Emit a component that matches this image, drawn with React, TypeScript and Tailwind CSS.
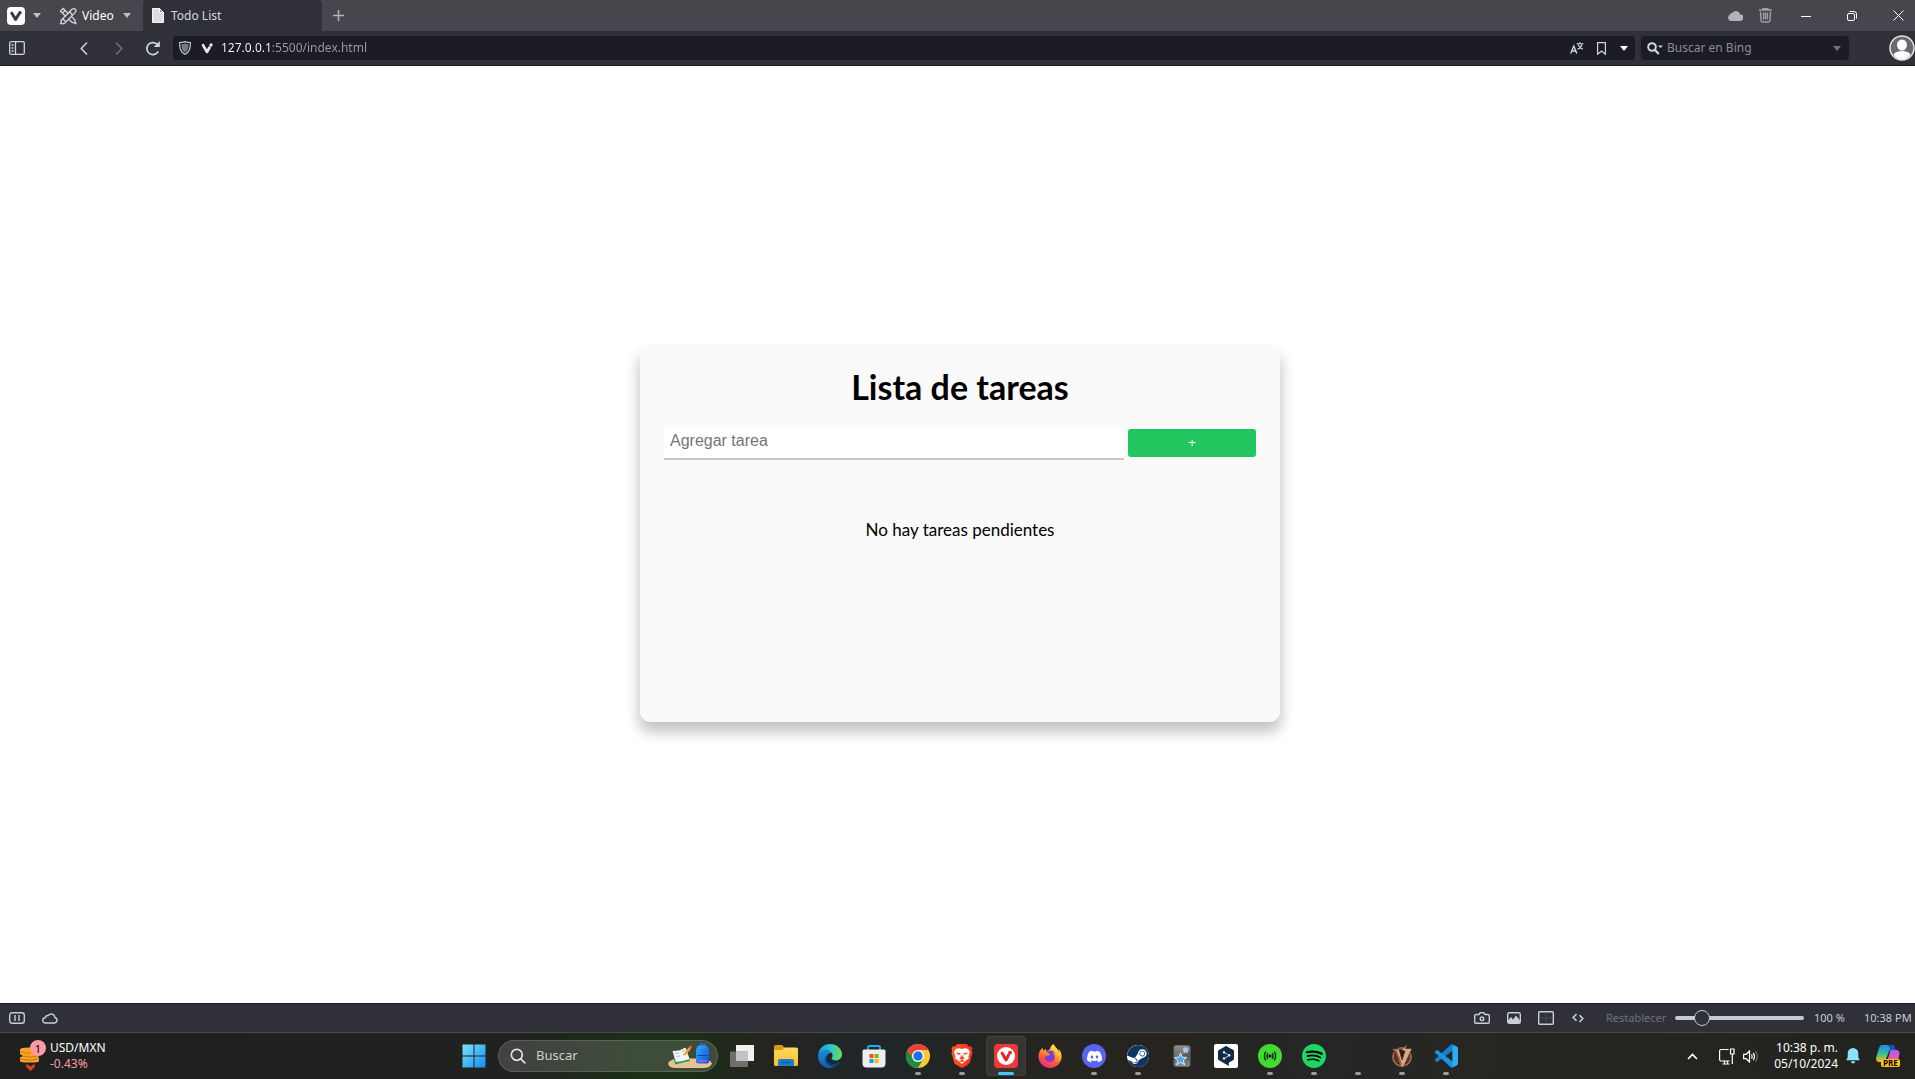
import { useState } from "react";
import type { ReactNode } from "react";
import { SiVivaldi, SiDiscord, SiSteam, SiSpotify, SiFirefoxbrowser, SiDeepl } from "react-icons/si";

function Caret({ className }: { className: string }) {
  return (
    <svg viewBox="0 0 8 5" className={`h-[5px] w-2 ${className}`} fill="currentColor">
      <path d="M0 0h8L4 5z" />
    </svg>
  );
}

function TabBar() {
  return (
    <header className="flex h-[31px] items-stretch bg-[#46464d] text-[12px] text-[#d5d8e0]">
      <button aria-label="Menú de Vivaldi" className="flex w-[50px] items-center gap-2 pl-[7px] text-[#bfc0c6]">
        <span className="grid size-[18px] place-items-center rounded-[4px] bg-white">
          <svg viewBox="0 0 18 18" className="size-[18px]">
            <path d="M4.800 6.200 8.600 12.400l3-5" fill="none" stroke="#3b3b42" strokeWidth="3" strokeLinecap="round" strokeLinejoin="round" />
            <circle cx="13" cy="5.800" r="1.800" fill="#3b3b42" />
          </svg>
        </span>
        <Caret className="" />
      </button>
      <button className="flex w-[93px] items-center gap-[5px] pl-[9px] text-white">
        <svg viewBox="0 0 18 18" className="size-[18px]" fill="none" stroke="#d8d8dc" strokeWidth="1.300">
          <path d="M1.500 4.200 4.200 1.500 15.500 12.500l1.300 4-4-1.300zM3 6.500 6.500 3" />
          <path d="M2 13.500 13 2.200q2.200-1.200 3.500.2 1 1.400-.3 3L6 16q-2.500 1.500-4.500.5 1.500-1 .5-3z" fill="#46464d" />
          <path d="M10.500 4.800 13.500 8M4 12l2.500 2.500" />
        </svg>
        <span>Video</span>
        <Caret className="ml-1 text-[#bfc0c6]" />
      </button>
      <button className="flex w-[179px] items-center gap-[7px] rounded-t-[4px] bg-[#2f3038] pl-[9px]">
        <svg viewBox="0 0 12 15" className="h-[15px] w-3">
          <path d="M.5.500h7l4 4v10H.5z" fill="#dedede" stroke="#f7f7f7" />
          <path d="M7.500.500v4h4z" fill="#8c8c8c" stroke="#f7f7f7" />
        </svg>
        <span>Todo List</span>
      </button>
      <button aria-label="Nueva pestaña" className="grid w-8 place-items-center text-[#b3b4b9]">
        <svg viewBox="0 0 11 11" className="size-[11px]" stroke="currentColor" strokeWidth="1.500"><path d="M5.500 0v11M0 5.500h11" /></svg>
      </button>
      <div className="ml-auto flex items-center">
        <button aria-label="Sincronización" className="grid w-[30px] place-items-center">
          <svg viewBox="0 0 16 11" className="h-[11px] w-4" fill="#b2b3b7"><path d="M3.500 11a3.500 3.500 0 0 1-.4-6.500A3 3 0 0 1 6 2.500 4 4 0 0 1 13 4.200 3.400 3.400 0 0 1 12.800 11z" /></svg>
        </button>
        <button aria-label="Papelera" className="grid w-[30px] place-items-center text-[#a0a1a6]">
          <svg viewBox="0 0 13 15" className="h-[15px] w-[13px]" fill="none" stroke="currentColor" strokeWidth="1.400">
            <path d="M0 2h13M4 1.800V.700h5v1.100M1.500 3.500 2 12.500q.2 1.500 1.500 1.500h6q1.300 0 1.500-1.500l.5-9M4.500 4.500v7M6.500 4.500v7M8.500 4.500v7" />
          </svg>
        </button>
        <button aria-label="Minimizar" className="ml-2.5 grid h-full w-8 place-items-center"><span className="mt-0.5 h-px w-2.5 bg-white" /></button>
        <button aria-label="Restaurar" className="grid h-full w-[60px] place-items-center">
          <svg viewBox="0 0 10 10" className="size-2.5" fill="none" stroke="#fff"><rect x=".5" y="2.500" width="7" height="7" rx="1.500" /><path d="M2.500.500H7a2.500 2.500 0 0 1 2.500 2.500v4.500" /></svg>
        </button>
        <button aria-label="Cerrar" className="grid h-full w-[33px] place-items-center">
          <svg viewBox="0 0 11 11" className="size-[11px]" stroke="#fff"><path d="m.5.500 10 10M10.500.500l-10 10" /></svg>
        </button>
      </div>
    </header>
  );
}

function AddressBar() {
  return (
    <nav className="flex h-[35px] items-center border-b border-[#17171c] bg-[#2f3038] text-[#d0d5df]">
      <button aria-label="Panel" className="grid w-[34px] place-items-center">
        <svg viewBox="0 0 16 14" className="h-3.5 w-4" fill="none" stroke="currentColor" strokeWidth="1.300"><rect x=".7" y=".7" width="14.600" height="12.600" rx="1.500" /><path d="M6.500.700v12.600M2.500 4h2M2.500 7h2M2.500 10h2" /></svg>
      </button>
      <button aria-label="Atrás" className="ml-[33px] grid w-[34px] place-items-center">
        <svg viewBox="0 0 8 13" className="h-[13px] w-2" fill="none" stroke="currentColor" strokeWidth="1.500"><path d="M7 .5 1.200 6.500 7 12.500" /></svg>
      </button>
      <button aria-label="Adelante" className="ml-px grid w-[34px] place-items-center text-[#70727c]">
        <svg viewBox="0 0 8 13" className="h-[13px] w-2" fill="none" stroke="currentColor" strokeWidth="1.500"><path d="m1 .5 5.800 6L1 12.500" /></svg>
      </button>
      <button aria-label="Recargar" className="grid w-[34px] place-items-center">
        <svg viewBox="0 0 16 15" className="h-[15px] w-4"><path d="M13.200 10.300A6 6 0 1 1 12 3.200" fill="none" stroke="currentColor" strokeWidth="1.700" /><path d="M14.800 0v6H8.800z" fill="currentColor" /></svg>
      </button>
      <div className="ml-[3px] flex h-6 flex-1 items-center rounded-[4px] bg-[#1b1c25] pl-1.5">
        <svg viewBox="0 0 12 14" className="h-3.5 w-3"><path d="M.6 1.500Q3 1.500 6 .600q3 .9 5.400.9c0 6-.8 9.500-5.400 11.800C1.400 11 .6 7.500.6 1.500z" fill="none" stroke="#c5c9d2" strokeWidth="1.200" /><path d="M2.500 3.200Q4.500 3.200 6 2.500q1.500.7 3.500.7c0 4.300-.6 6.500-3.500 8.200-2.900-1.700-3.500-3.900-3.500-8.200z" fill="#777a83" /></svg>
        <svg viewBox="0 0 12 11" className="ml-2.5 h-[11px] w-3"><path d="M2 2.200 6 9l2.500-4.500" fill="none" stroke="#e6e8ee" strokeWidth="2.600" strokeLinecap="round" strokeLinejoin="round" /><circle cx="10" cy="2" r="1.700" fill="#e6e8ee" /></svg>
        <input
          aria-label="Dirección"
          defaultValue="127.0.0.1:5500/index.html"
          className="ml-2 w-0 flex-1 bg-[linear-gradient(90deg,#fff_51px,#9a9da7_51px)] bg-clip-text text-[12px] leading-6 text-transparent caret-white outline-none"
        />
        <button aria-label="Traducir" className="grid w-6 place-items-center">
          <svg viewBox="0 0 14 12" className="h-3 w-3.5" fill="none" stroke="currentColor" strokeWidth="1.400"><path d="M.7 11.500 3.800 4l3 7.500M1.800 9h4" /><path strokeWidth="1.100" d="M6.500 1.800h7M10 .3v1.500M8 2.500q1.500 3.500 5 4.700M12 2.500q-1 3.500-4.500 4.700" /></svg>
        </button>
        <button aria-label="Marcador" className="grid w-6 place-items-center">
          <svg viewBox="0 0 9 13" className="h-[13px] w-[9px]" fill="none" stroke="currentColor" strokeWidth="1.200"><path d="M.6.600h7.800v11.600L4.500 9 .6 12.200z" /></svg>
        </button>
        <button aria-label="Mostrar marcadores" className="grid w-[22px] place-items-center"><Caret className="text-white" /></button>
      </div>
      <div className="ml-1.5 flex h-6 w-52 items-center rounded-[4px] bg-[#1b1c25] pl-1.5">
        <svg viewBox="0 0 16 13" className="h-[13px] w-4"><circle cx="5" cy="5" r="3.800" fill="none" stroke="#d0d5df" strokeWidth="2" /><path d="m8 8 3.800 4" stroke="#d0d5df" strokeWidth="2.300" /><path d="M11 3.500h5L13.500 6z" fill="#d0d5df" /></svg>
        <input aria-label="Buscar en Bing" placeholder="Buscar en Bing" className="ml-1 w-0 flex-1 bg-transparent text-[12px] leading-6 outline-none placeholder:text-[#8b8d97]" />
        <button aria-label="Motores de búsqueda" className="grid w-6 place-items-center"><Caret className="text-[#70727c]" /></button>
      </div>
      <button aria-label="Perfil" className="ml-10 w-[26px]">
        <svg viewBox="0 0 26 26" className="size-[26px]"><circle cx="13" cy="13" r="12" fill="#6a6a6c" stroke="#e4e4e6" strokeWidth="1.500" /><ellipse cx="13" cy="10" rx="5" ry="5.500" fill="#fff" /><path d="M4.500 19.500q2-3.500 8.500-3.500t8.500 3.500Q18.500 24.500 13 24.500t-8.500-5z" fill="#fff" /></svg>
      </button>
    </nav>
  );
}

function TodoPage() {
  const [task, setTask] = useState("");
  return (
    <main className="flex flex-1 items-center justify-center bg-white pl-[5px] font-[Lato,sans-serif] text-black">
      <section className="min-h-[375px] w-full max-w-[640px] rounded-[10px] bg-[#fafafa] p-6 shadow-[0_9px_14px_1px_rgba(0,0,0,0.24)]">
        <h1 className="text-center text-[34px] leading-8 font-bold">Lista de tareas</h1>
        <form className="mt-6 flex items-start gap-1" onSubmit={(e) => e.preventDefault()}>
          <input
            aria-label="Agregar tarea"
            placeholder="Agregar tarea"
            value={task}
            onChange={(e) => setTask(e.target.value)}
            className="h-[33px] w-0 flex-1 border-b-2 border-[#c8c8c8] bg-white px-1.5 pb-1 font-['Liberation_Sans',sans-serif] text-base outline-none placeholder:text-[#757575]"
          />
          <button className="mt-0.5 h-7 w-32 rounded-[3px] bg-[#22c55e] font-['Liberation_Sans',sans-serif] text-[13px] text-white">+</button>
        </form>
        <p className="mt-[58px] text-center text-[17px] leading-6">No hay tareas pendientes</p>
      </section>
    </main>
  );
}

function StatusBar() {
  return (
    <footer className="flex h-[29px] items-center border-t border-[#1c1c22] bg-[#2f3038] text-[11px] text-[#c8cdd7]">
      <button aria-label="Pausar" className="grid w-[34px] place-items-center">
        <svg viewBox="0 0 16 12" className="h-3 w-4" fill="none" stroke="currentColor" strokeWidth="1.400"><rect x=".7" y=".7" width="14.600" height="10.600" rx="2.500" /><path d="M6 3v6M10 3v6" /></svg>
      </button>
      <button aria-label="Sincronizar" className="grid w-8 place-items-center">
        <svg viewBox="0 0 16 11" className="h-[11px] w-4" fill="none" stroke="currentColor" strokeWidth="1.400"><path d="M3.500 10a2.600 2.600 0 0 1-.3-5.200A2.800 2.800 0 0 1 6.300 2.500 3.600 3.600 0 0 1 12.800 4.500 2.800 2.800 0 0 1 12.600 10z" /></svg>
      </button>
      <div className="ml-auto flex items-center">
        <button aria-label="Capturar" className="grid w-8 place-items-center">
          <svg viewBox="0 0 16 12" className="h-3 w-4" fill="none" stroke="currentColor" strokeWidth="1.400"><path d="M2 2.500h3L6.200.700h3.600L11 2.500h3q1.300 0 1.300 1.300V10q0 1.300-1.300 1.300H2Q.7 11.300.7 10V3.800Q.7 2.500 2 2.500z" /><circle cx="8" cy="6.800" r="1.800" /></svg>
        </button>
        <button aria-label="Imágenes" className="grid w-8 place-items-center">
          <svg viewBox="0 0 14 12" className="h-3 w-3.5"><rect x=".7" y=".7" width="12.600" height="10.600" rx="1.500" fill="none" stroke="currentColor" strokeWidth="1.400" /><path d="M1 10.500V8.500L4 5l2 2.500L9 3.500l4 5v2.500H1z" fill="currentColor" /></svg>
        </button>
        <button aria-label="Mosaico" className="grid w-8 place-items-center">
          <svg viewBox="0 0 16 14" className="h-3.5 w-4" fill="none" stroke="currentColor" strokeWidth="1.400"><rect x=".7" y=".7" width="14.600" height="12.600" rx="1" /><path d="M8 1.500v11M1.500 7h13" stroke="#4a4c57" strokeWidth="1" /></svg>
        </button>
        <button aria-label="Acciones de página" className="grid w-8 place-items-center">
          <svg viewBox="0 0 12 10" className="h-2.5 w-3" fill="none" stroke="currentColor" strokeWidth="1.600"><path d="M4.500 1 1.200 4.500l3.300 3.300M7.500 2.200l3.300 3.300L7.500 9" /></svg>
        </button>
        <button className="ml-3 w-[60px] text-left whitespace-nowrap text-[#70727d]">Restablecer</button>
        <input
          type="range"
          aria-label="Zoom"
          min="20"
          max="500"
          defaultValue="100"
          className="ml-[9px] h-4 w-[129px] appearance-none bg-transparent [&::-webkit-slider-runnable-track]:h-1 [&::-webkit-slider-runnable-track]:rounded-full [&::-webkit-slider-runnable-track]:bg-[#c5cad3] [&::-webkit-slider-thumb]:-mt-1.5 [&::-webkit-slider-thumb]:size-4 [&::-webkit-slider-thumb]:appearance-none [&::-webkit-slider-thumb]:rounded-full [&::-webkit-slider-thumb]:border [&::-webkit-slider-thumb]:border-[#c5cad3] [&::-webkit-slider-thumb]:bg-[#2f3038]"
        />
        <span className="ml-2.5 w-[50px] whitespace-nowrap">100 %</span>
        <span className="w-[51px] whitespace-nowrap">10:38 PM</span>
      </div>
    </footer>
  );
}

function TaskSlot({ label, indicator, active, children }: { label: string; indicator?: boolean; active?: boolean; children?: ReactNode }) {
  return (
    <button aria-label={label} className="relative grid h-full w-11 place-items-center">
      {active && <span className="absolute inset-x-0.5 top-[3px] bottom-[3px] rounded-[4px] border border-white/5 bg-white/8" />}
      <span className="relative grid size-6 place-items-center">{children}</span>
      {indicator && !active && <span className="absolute bottom-1 h-[3px] w-1.5 rounded-full bg-[#9c9c9a]" />}
      {active && <span className="absolute bottom-1 h-[3px] w-4 rounded-full bg-[#4cc2ff]" />}
    </button>
  );
}

function ExplorerIcon() {
  return (
    <svg viewBox="0 0 24 24" className="size-6">
      <defs><linearGradient id="folder" x2="0" y2="1"><stop stopColor="#ffdb61" /><stop offset="1" stopColor="#fcbc23" /></linearGradient></defs>
      <path d="M0 3q0-2 1.500-2H8l3 3v3H0z" fill="#d99a0b" />
      <path d="M0 6h8l2.500-2.500H22q2 0 2 1.500v15.500q0 1.500-1.500 1.500h-21Q0 22 0 20.500z" fill="url(#folder)" />
      <path d="M4 22v-5q0-2 2-2h12q2 0 2 2v5z" fill="#1a7fd0" />
      <path d="M7.500 18.500h9" stroke="#0d5a9e" strokeWidth="1.500" />
    </svg>
  );
}

function EdgeIcon() {
  return (
    <svg viewBox="0 0 24 24" className="size-6">
      <defs>
        <linearGradient id="edgeTop" y1=".4" y2=".4"><stop stopColor="#1a9de0" /><stop offset=".5" stopColor="#2bc0d8" /><stop offset="1" stopColor="#6be04e" /></linearGradient>
        <linearGradient id="edgeMid" x2="0" y2="1"><stop stopColor="#1690dc" /><stop offset="1" stopColor="#0d5cb0" /></linearGradient>
      </defs>
      <path d="M.1 11C.8 4.500 5.800 0 12 0c7 0 12 5 12 10.200 0 3.600-2.700 6.300-6.200 6.300-2.600 0-4.300-1-4.300-1.900 0-.7 1.100-1.100 1.100-3 0-2.600-2.700-5-6.200-5C4.500 6.600 1.300 8.500.1 11z" fill="url(#edgeTop)" />
      <path d="M.1 11c1.100-2.700 4-4.600 7.700-4.600 2.900 0 5 .9 6.200 2.600-3.700-.6-5.500 2-5.500 4.700 0 5 5.300 8.400 10.500 7-2 2.100-4.600 3.300-7.400 3.300C4.800 24-.7 18 .1 11z" fill="url(#edgeMid)" />
      <path d="M9.500 11c-1.300 1.800-1.200 4.700.7 6.900 2.300 2.500 6.600 3 10.600.6.8-.4 1.500.2 1 1C19 24 10 23.600 7.500 17.500c-1-2.600-.4-5 2-6.500z" fill="#0a3f86" />
    </svg>
  );
}

function StoreIcon() {
  return (
    <svg viewBox="0 0 24 24" className="size-6">
      <path d="M6 6V3.500Q6 2 7.500 2h9Q18 2 18 3.500V6" fill="none" stroke="#20a7ec" strokeWidth="2" />
      <path d="M.5 7q0-1.500 1.500-1.500h20q1.500 0 1.500 1.500v12.500q0 4-4 4h-15q-4 0-4-4z" fill="#eeeeef" />
      <path d="M7.500 10h4v4h-4z" fill="#f25022" /><path d="M12.500 10h4v4h-4z" fill="#7fba00" /><path d="M7.500 15h4v4h-4z" fill="#00a4ef" /><path d="M12.500 15h4v4h-4z" fill="#ffb900" />
    </svg>
  );
}

function ChromeIcon() {
  return (
    <svg viewBox="0 0 24 24" className="size-6">
      <circle cx="12" cy="12" r="12" fill="#fcc934" />
      <path d="M1.600 6A12 12 0 0 1 22.400 6H12l-5.200 9z" fill="#ea4335" />
      <path d="M1.600 6A12 12 0 0 0 12 24l5.200-9-10.400 0z" fill="#1e8e3e" />
      <circle cx="12" cy="12" r="6" fill="#fff" /><circle cx="12" cy="12" r="4.700" fill="#1a73e8" />
    </svg>
  );
}

function BraveIcon() {
  return (
    <svg viewBox="0 0 24 24" className="size-6">
      <defs><linearGradient id="brave" x2="1" y2="0"><stop stopColor="#ff5a1f" /><stop offset="1" stopColor="#fb2c1c" /></linearGradient></defs>
      <path d="M7.500 0h9l2.500 2.500 2-.3 1.500 2.300-.6 2L22.500 9 20 18q-.4 1.400-1.800 2.400L12 24.000l-6.200-3.600Q4.400 19.400 4 18L1.500 9l.6-2.500-.6-2L3 2.200l2 .3z" fill="url(#brave)" />
      <path d="M6 4.800 9.500 4.200 12 5l2.500-.8 3.500.6 2 3.200-1.500 4.500.3 2-3.800 2.700L12 20l-3-2.800-3.800-2.700.3-2L4 8z" fill="#fff" />
      <path d="m6 8.500 4.500.8-.5 1.500-2.500-.5zM18 8.500l-4.500.8.5 1.500 2.500-.5zM10.800 10v3l-1.500 1.500 2.700 1.300 2.700-1.300-1.500-1.500v-3L12 13zM9 17l3-1.300 3 1.300-3 1z" fill="#fb3f1e" />
    </svg>
  );
}

function FirefoxIcon() {
  return (
    <svg viewBox="0 0 24 24" className="size-6">
      <defs><linearGradient id="fox" x1=".8" y1="0" x2=".3" y2="1"><stop stopColor="#fff44f" /><stop offset=".35" stopColor="#ffb52e" /><stop offset=".65" stopColor="#ff5a36" /><stop offset="1" stopColor="#e6288c" /></linearGradient></defs>
      <circle cx="12" cy="12" r="6.500" fill="#7a3bd6" />
      <SiFirefoxbrowser size={24} style={{ fill: "url(#fox)" }} />
    </svg>
  );
}

function AnkiIcon() {
  return (
    <svg viewBox="0 0 24 24" className="size-6">
      <defs><linearGradient id="anki" x2="0" y2="1"><stop stopColor="#777" /><stop offset=".5" stopColor="#555" /><stop offset="1" stopColor="#8c8c8c" /></linearGradient></defs>
      <rect x="4" y="1.500" width="16" height="21" rx="2" fill="url(#anki)" stroke="#6b6b6b" />
      <path d="M4.500 12Q14 13 19.500 7V3q0-1-1-1H5.500q-1 0-1 1z" fill="#fff" opacity=".15" />
      <path d="m10.500 9 1.700 4.200 4.500.2-3.400 3 1.300 4.400-4-2.400-3.800 2.500 1-4.500-3.300-2.900 4.400-.4z" fill="#49a9f2" stroke="#e9f6ff" strokeWidth=".9" />
      <path d="m15.500 3 .9 2 2.100.1-1.600 1.400.6 2-1.900-1-1.800 1.100.5-2.100-1.500-1.400 2-.2z" fill="#7fc6fa" stroke="#e9f6ff" strokeWidth=".6" />
    </svg>
  );
}

function CodeIcon() {
  return (
    <svg viewBox="0 0 24 24" className="size-6">
      <path d="M17.500.100 1 15.200q-.8.700 0 1.400l1.400 1.200q.6.500 1.300 0L20 5.400z" fill="#1180cf" />
      <path d="M17.500 23.900 1 8.800Q.2 8.100 1 7.400l1.400-1.200q.6-.5 1.300 0L20 18.600z" fill="#1a93e0" />
      <path d="M17.500 23.900q.9-.4.900-1.400V1.500q0-1-.9-1.400L22.800 2.600Q24 3.200 24 4.500v15q0 1.300-1.200 1.900z" fill="#2fabf3" />
    </svg>
  );
}

function GameIcon() {
  return (
    <svg viewBox="0 0 24 24" className="size-6">
      <circle cx="12" cy="13" r="9" fill="#3d120f" stroke="#8f7460" strokeWidth="1.800" />
      <path d="M5.500 8q-1.500 6 3 11M18.500 9q2 5-3 10" stroke="#7d2a1e" strokeWidth="2.500" fill="none" />
      <path d="M2 5h7l3 11 3-9-4-1 6-5.500-1.500 4H22L13.500 23h-2.800L5.500 7.500z" fill="#cfae8a" stroke="#5d2a1c" strokeWidth=".8" />
      <path d="m6 6 5.500 15" stroke="#8b5b3d" strokeWidth="1.200" />
    </svg>
  );
}

function SearchArt() {
  return (
    <svg viewBox="0 0 46 26" className="h-[26px] w-[46px]">
      <defs><linearGradient id="bag" y2="1" x2="1"><stop stopColor="#30b0ff" /><stop offset="1" stopColor="#0d4fd8" /></linearGradient></defs>
      <path d="M1 20.500q3-5 11-5h22q8 0 11 5-2 4.500-9 4.500H9q-7 0-8-4.500z" fill="#e8c391" />
      <path d="m6 9 13-4 4 13-15 3.500z" fill="#2f9d57" /><path d="m5.500 8 7-.500 6-3 4 11.500-7 2-6.500 1z" fill="#f4f4fb" />
      <path d="m8 10.500 4-.5M9 13.500l4-.5M15 8.500l3-1.500M16 12l3.500-1.500" stroke="#a9a9c4" strokeWidth=".8" />
      <path d="m17 10.500 5-6.500 2 1.800-5 6-2.600 1z" fill="#f7a228" /><path d="m21.800 4 1.500-1.700 2 1.800L23.800 6z" fill="#ea4b56" />
      <path d="M33 3q0-2.500 2.500-2.500T38 3" fill="none" stroke="#1a6de0" strokeWidth="1.500" />
      <path d="M29 8q0-6 6.500-6T42 8v10.500q0 2-2 2h-9q-2 0-2-2z" fill="url(#bag)" /><path d="M30.500 12.500h10" stroke="#0a3fae" /><path d="M31 18h9" stroke="#b05cf0" strokeWidth="1.500" />
    </svg>
  );
}

function Taskbar() {
  return (
    <div className="grid h-[47px] grid-cols-[1fr_auto_1fr] items-stretch border-t border-[#4a4a4b] bg-[linear-gradient(90deg,#1f2121_0%,#202220_27%,#1c2e17_33%,#1c2e17_36%,#242420_40%,#20262a_46%,#252420_52%,#272420_62%,#242726_68%,#262622_76%,#22221f_100%)] text-[12px] text-white">
      <button className="flex items-center pl-[19px] text-left">
        <span className="relative mr-[5px] h-[30px] w-[26px]">
          <svg viewBox="0 0 26 30" className="h-[30px] w-[26px]">
            <path d="M1 8.500Q1 6.500 10 6.500t9 2v3.500l.5 4q0 1 .5 1.500V20q0 1.500-9.500 1.500T1 20v-3.500l3-1.500-3-2z" fill="#f6a623" />
            <path d="M1 10.500q5 2 11 1.500M3 15q7 2 15 .5M1 18q9 2.500 18 0" stroke="#cf7417" fill="none" />
            <path d="M7 23.500h2l2.500 2 2.500-2h2v2L11.500 30 7 25.500z" fill="#d8431c" />
          </svg>
          <span className="absolute -top-px left-[11px] grid size-4 place-items-center rounded-full bg-[#ff99a4] text-[11px] leading-none text-black">1</span>
        </span>
        <span className="leading-4"><span className="block">USD/MXN</span><span className="block text-[#ff99a4]">-0.43%</span></span>
      </button>
      <div className="flex items-center pl-[5px]">
        <TaskSlot label="Inicio">
          <svg viewBox="0 0 24 24" className="size-6">
            <defs><linearGradient id="win" x2="1" y2="1"><stop stopColor="#7de3fd" /><stop offset="1" stopColor="#0f8cf2" /></linearGradient></defs>
            <path d="M.500.500h11v11H.500zM12.500.500h11v11h-11zM.500 12.500h11v11H.500zM12.500 12.500h11v11h-11z" fill="url(#win)" />
          </svg>
        </TaskSlot>
        <label className="mx-0.5 flex h-8 w-[220px] items-center rounded-full border border-white/15 bg-white/15 pr-1 pl-[11px]">
          <svg viewBox="0 0 16 16" className="size-4" fill="none" stroke="#e2e2e2" strokeWidth="1.700"><circle cx="6.800" cy="6.800" r="5.500" /><path d="m10.800 10.800 4 4" strokeLinecap="round" /></svg>
          <input aria-label="Buscar" placeholder="Buscar" className="ml-2.5 w-0 flex-1 bg-transparent text-[13px] outline-none placeholder:text-[#cfd0ce]" />
          <SearchArt />
        </label>
        <TaskSlot label="Vista de tareas">
          <svg viewBox="0 0 24 24" className="size-6"><path d="M6 1h18v16H6z" fill="#f0f0f0" /><path d="M0 7.500h18V23H0z" fill="#6f6f6f" /><path d="M6 7.500h12V17H6z" fill="#c2c2c2" /></svg>
        </TaskSlot>
        <TaskSlot label="Explorador"><ExplorerIcon /></TaskSlot>
        <TaskSlot label="Edge"><EdgeIcon /></TaskSlot>
        <TaskSlot label="Microsoft Store"><StoreIcon /></TaskSlot>
        <TaskSlot label="Chrome" indicator><ChromeIcon /></TaskSlot>
        <TaskSlot label="Brave" indicator><BraveIcon /></TaskSlot>
        <TaskSlot label="Vivaldi" indicator active>
          <span className="relative grid size-6 place-items-center overflow-hidden rounded-[4px] bg-[#ef3939]">
            <svg viewBox="0 0 24 24" className="size-6"><circle cx="12" cy="12" r="9" fill="#fff" /><path d="m8 9 4 7 2.500-5" fill="none" stroke="#d92b2b" strokeWidth="3" strokeLinecap="round" strokeLinejoin="round" /><circle cx="16" cy="8.700" r="1.900" fill="#d92b2b" /></svg>
          </span>
        </TaskSlot>
        <TaskSlot label="Firefox"><FirefoxIcon /></TaskSlot>
        <TaskSlot label="Discord" indicator><span className="grid size-6 place-items-center rounded-full bg-[#5865f2]"><SiDiscord size={15} /></span></TaskSlot>
        <TaskSlot label="Steam" indicator>
          <span className="grid size-[22px] place-items-center overflow-hidden rounded-full bg-white"><SiSteam size={23} className="text-[#0d3561]" /></span>
        </TaskSlot>
        <TaskSlot label="Anki"><AnkiIcon /></TaskSlot>
        <TaskSlot label="DeepL"><span className="grid size-6 place-items-center rounded-[2px] bg-white"><SiDeepl size={20} className="text-[#0f2b46]" /></span></TaskSlot>
        <TaskSlot label="Transmisión" indicator>
          <svg viewBox="0 0 24 24" className="size-6"><circle cx="12" cy="12" r="12" fill="#3fdb2e" /><circle cx="12" cy="12" r="1.500" /><path d="M9.700 9.500q-1.500 2.500 0 5M14.300 9.500q1.500 2.500 0 5M7.500 8q-2.200 4 0 8M16.500 8q2.200 4 0 8" fill="none" stroke="#111" strokeWidth="1.300" strokeLinecap="round" /></svg>
        </TaskSlot>
        <TaskSlot label="Spotify" indicator><span className="relative grid size-6 place-items-center rounded-full"><span className="absolute inset-px rounded-full bg-black" /><SiSpotify size={24} className="relative text-[#1ed760]" /></span></TaskSlot>
        <TaskSlot label="Aplicación" indicator />
        <TaskSlot label="Juego" indicator><GameIcon /></TaskSlot>
        <TaskSlot label="Visual Studio Code" indicator><CodeIcon /></TaskSlot>
      </div>
      <div className="flex items-center justify-end">
        <button aria-label="Iconos ocultos" className="grid w-8 place-items-center">
          <svg viewBox="0 0 11 7" className="h-[7px] w-[11px]" fill="none" stroke="#fff" strokeWidth="1.600"><path d="m1 6 4.500-4.500L10 6" /></svg>
        </button>
        <button aria-label="Red y volumen" className="ml-1.5 flex w-[50px] items-center justify-center gap-2">
          <svg viewBox="0 0 16 17" className="h-[17px] w-4 shrink-0" fill="none" stroke="#fff" strokeWidth="1.200"><path d="M9.500 1.500H2Q.6 1.500.6 3v8.500Q.6 13 2 13h8.500M3.500 16h7M5.500 13v3M8.500 13v3M11.500 1h3.500v5h-3.500zM13.300 6v10" /></svg>
          <svg viewBox="0 0 16 13" className="h-[13px] w-4 shrink-0" fill="none" stroke="#fff" strokeWidth="1.200"><path d="M.6 4.300h2.500L6.500 1v11L3.100 8.700H.6zM8.500 4.500q1.200 2 0 4" /><path d="M10.200 2.800q2.400 3.700 0 7.400" /><path d="M12.500 1q3.500 5.500 0 11" stroke="#6d6d6c" /></svg>
        </button>
        <button className="ml-2 w-[66px] text-right leading-4 whitespace-nowrap"><span className="block">10:38 p. m.</span><span className="block">05/10/2024</span></button>
        <button aria-label="Notificaciones" className="ml-2 w-3.5">
          <svg viewBox="0 0 14 16" className="h-4 w-3.5" fill="#8be4fb"><path d="M7 0a5.300 5.300 0 0 1 5.300 5.300v4l1.500 2.900H.2l1.500-2.900v-4A5.300 5.300 0 0 1 7 0zM4.700 13.200h4.600Q8.800 15.500 7 15.500t-2.300-2.300z" /></svg>
        </button>
        <button aria-label="Copilot" className="relative mr-[15px] ml-4 size-6">
          <svg viewBox="0 0 24 24" className="size-6">
            <defs><linearGradient id="copA" x2="0" y2="1"><stop stopColor="#1c8df0" /><stop offset=".5" stopColor="#2fbf93" /><stop offset="1" stopColor="#f2c21a" /></linearGradient><linearGradient id="copB" x2="0" y2="1"><stop stopColor="#a75cf0" /><stop offset=".5" stopColor="#e85bb0" /><stop offset="1" stopColor="#f58a4a" /></linearGradient></defs>
            <path d="M6 1h10q2 0 2.500 2l1 3h-6L10 15q-1 3-4 3H3q-3 0-3-4L3 4q.8-3 3-3z" fill="url(#copA)" />
            <path d="M11 1h5q2 0 2.500 2l1 3h-5Q13 1.500 11 1z" fill="#174fc0" />
            <path d="M14.500 6H20q4 0 3.500 4l-2 9q-1 4-4 4H8q2-1 3-5z" fill="url(#copB)" />
          </svg>
          <span className="absolute top-[15px] left-[5px] rounded-[2px] bg-[#ffc20e] px-0.5 text-[8px] leading-[8px] font-bold text-black">PRE</span>
        </button>
      </div>
    </div>
  );
}

export default function App() {
  return (
    <div className="flex min-h-screen flex-col overflow-hidden font-['Noto_Sans',sans-serif]">
      <TabBar />
      <AddressBar />
      <TodoPage />
      <StatusBar />
      <Taskbar />
    </div>
  );
}
